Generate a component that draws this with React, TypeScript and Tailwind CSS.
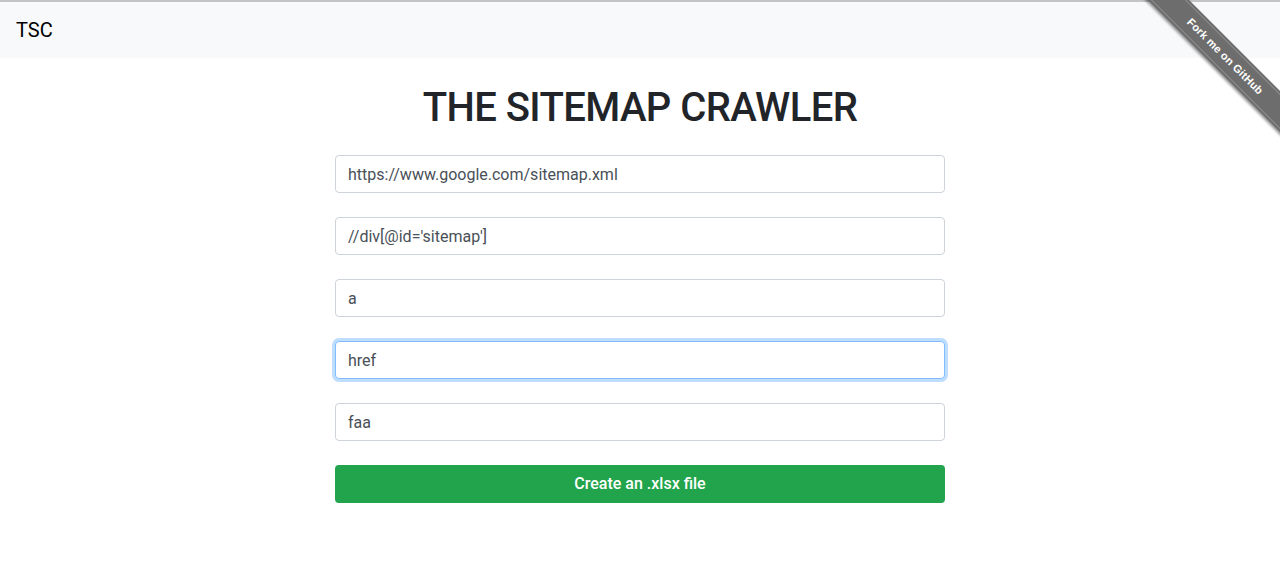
const fields = [
  { value: "https://www.google.com/sitemap.xml" },
  { value: "//div[@id='sitemap']" },
  { value: "a" },
  { value: "href", focused: true },
  { value: "faa" },
];

const ForkRibbon = () => (
  <div className="pointer-events-none absolute right-0 top-0 h-[149px] w-[149px] overflow-hidden">
    <a
      href="#"
      className="pointer-events-auto absolute left-[-12px] top-[42px] flex h-[29px] w-[212px] rotate-45 items-center justify-center bg-[#6d6d6d] shadow-[0_2px_3px_rgba(0,0,0,0.45)]"
    >
      <span className="flex h-[25px] w-full items-center justify-center border-y border-[#8c8c8c] text-[11px] font-bold text-white [font-family:'Liberation_Sans',sans-serif] tracking-[0.2px]">
        Fork me on GitHub
      </span>
    </a>
  </div>
);

export default function App() {
  return (
    <div className="relative min-h-[573px] bg-white [font-family:Roboto,'Liberation_Sans',sans-serif] text-[#212529]">
      <div className="h-[2px] bg-[#c4c4c4]" />
      <nav className="flex h-[56px] items-center bg-[#f8f9fa] px-4">
        <a href="#" className="text-[20px] leading-none text-black">
          TSC
        </a>
      </nav>

      <ForkRibbon />

      <main className="mx-auto w-[610px]">
        <h1 className="mt-[26px] mb-[23px] text-center text-[40px] font-medium leading-[48px] tracking-[-0.6px] text-[#212529]">
          THE SITEMAP CRAWLER
        </h1>

        <form className="flex flex-col gap-6" onSubmit={(e) => e.preventDefault()}>
          {fields.map((f, i) => (
            <input
              key={i}
              defaultValue={f.value}
              className={
                f.focused
                  ? "h-[38px] w-full rounded border border-[#80bdff] bg-white px-3 text-[16px] text-[#495057] shadow-[0_0_0_3px_rgba(0,123,255,0.25)] outline-none"
                  : "h-[38px] w-full rounded border border-[#ced4da] bg-white px-3 text-[16px] text-[#495057] outline-none"
              }
            />
          ))}
          <button
            type="submit"
            className="h-[38px] w-full rounded bg-[#22a44c] text-[16px] font-medium text-white"
          >
            Create an .xlsx file
          </button>
        </form>
      </main>
    </div>
  );
}
